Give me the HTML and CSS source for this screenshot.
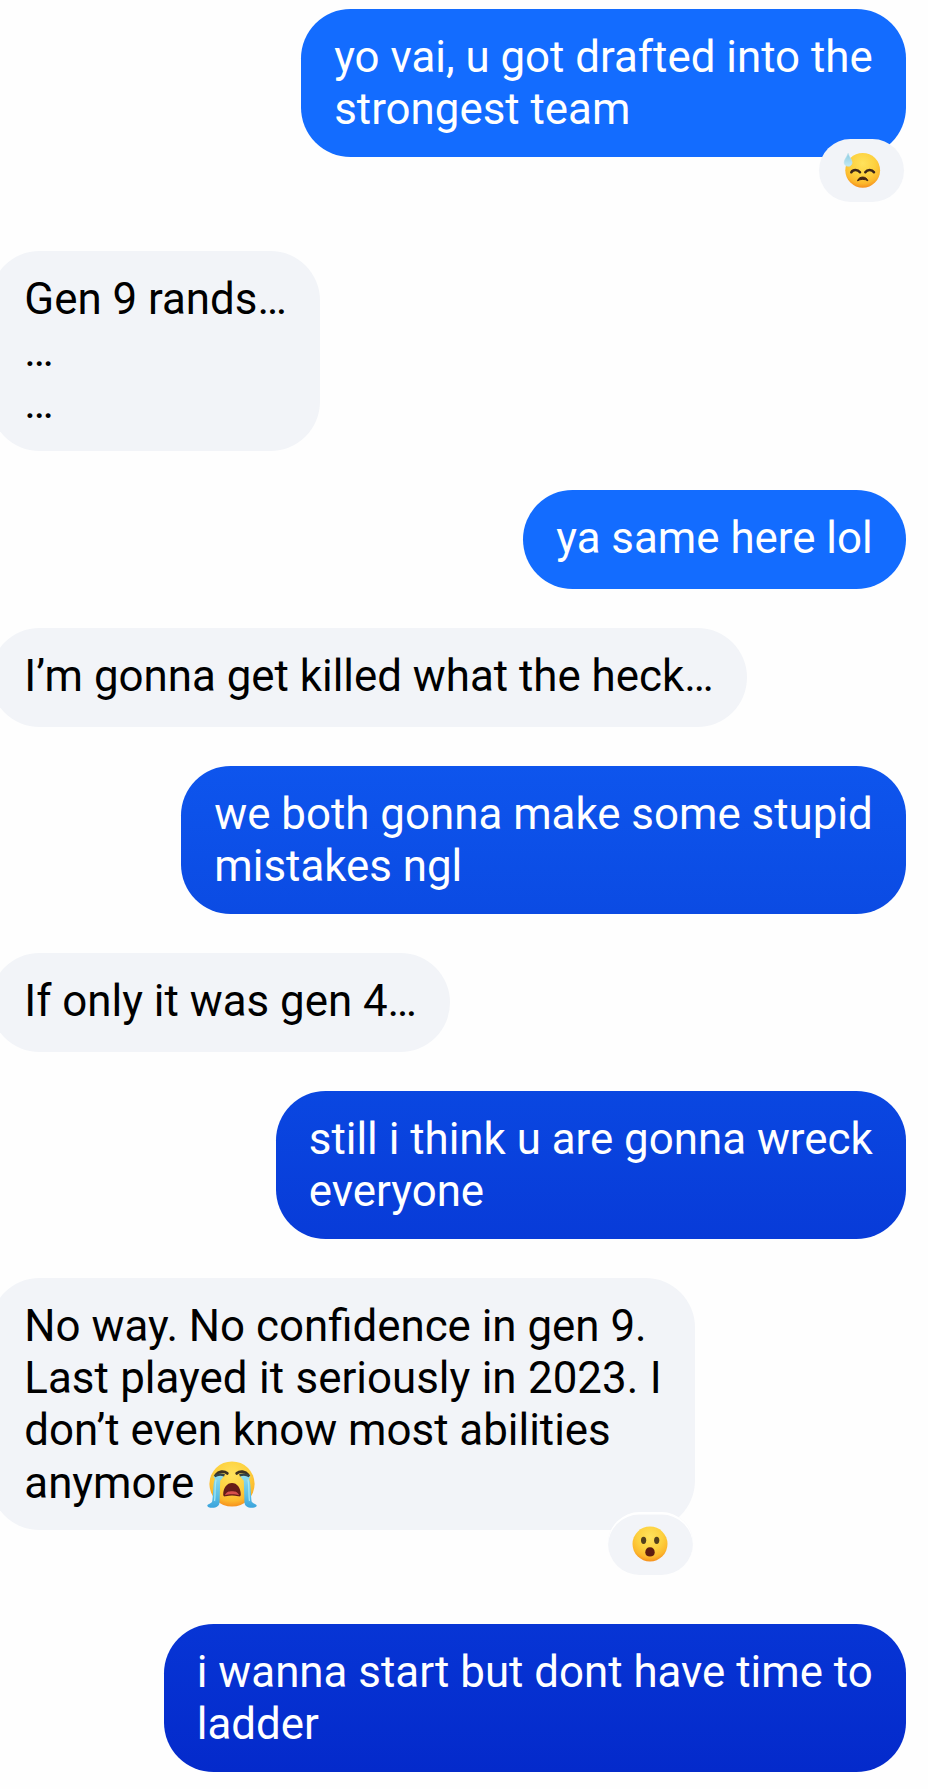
FILE: index.html
```html
<!DOCTYPE html>
<html lang="en">
<head>
<meta charset="utf-8">
<title>Chat</title>
<link rel="stylesheet" href="styles.css">
</head>
<body>
<svg class="defs" aria-hidden="true">
  <defs>
    <radialGradient id="face" cx=".5" cy=".3" r=".72">
      <stop offset="0" stop-color="#ffe25c"/>
      <stop offset=".5" stop-color="#fdd13f"/>
      <stop offset=".8" stop-color="#fcb82c"/>
      <stop offset="1" stop-color="#f58a1c"/>
    </radialGradient>
    <linearGradient id="tear" x1="0" y1="0" x2="0" y2="1">
      <stop offset="0" stop-color="#8fdcee"/>
      <stop offset=".6" stop-color="#5cc0e6"/>
      <stop offset="1" stop-color="#3ba3dc"/>
    </linearGradient>
    <linearGradient id="drop" x1="0" y1="0" x2="0" y2="1">
      <stop offset="0" stop-color="#8ccbe0"/>
      <stop offset="1" stop-color="#c3eaf5"/>
    </linearGradient>
  </defs>
</svg>
<main class="chat">
  <div class="message sent reacted tone-a">
    <p class="text">yo vai, u got drafted into the<br>strongest team</p>
    <span class="reaction">
      <svg class="react-icon" viewBox="0 0 40 40">
        <circle cx="20.7" cy="20.3" r="17.4" fill="url(#face)"/>
        <path d="M6.1 3.3C5 7 2.2 9.3 2.2 12.5c0 2.3 1.8 3.8 4 3.8s4-1.500 3.900-3.900C10 9.300 7.200 7 6.100 3.300z" fill="url(#drop)" stroke="#b9e1ed" stroke-width=".6"/>
        <path d="M9.300 22.300c1.700-3 6.400-3 8.700 0M23.300 22.300c2-3 6.700-3 8.700 0" fill="none" stroke="#3b2519" stroke-width="2.500" stroke-linecap="round"/>
        <path d="M15.500 30.800c1.500-5 8.900-5 10.400 0-2.800-1.900-7.600-1.900-10.400 0z" fill="#422312" stroke="#422312" stroke-width="1" stroke-linejoin="round"/>
      </svg>
    </span>
  </div>
  <div class="message received"><p class="text">Gen 9 rands…<br>…<br>…</p></div>
  <div class="message sent single tone-a"><p class="text">ya same here lol</p></div>
  <div class="message received single"><p class="text">I’m gonna get killed what the heck…</p></div>
  <div class="message sent tone-b"><p class="text">we both gonna make some stupid<br>mistakes ngl</p></div>
  <div class="message received single"><p class="text">If only it was gen 4…</p></div>
  <div class="message sent tone-c"><p class="text">still i think u are gonna wreck<br>everyone</p></div>
  <div class="message received reacted">
    <p class="text">No way. No confidence in gen 9.<br><span class="loose">Last played it seriously in 2023. I</span><br>don’t even know most abilities<br>anymore <svg class="inline-emoji" viewBox="0 0 50 50">
        <circle cx="25" cy="24" r="22.600" fill="url(#face)"/>
        <path d="M9 14.800c2.500-3.600 8-4.200 11.300-1.400M29.700 13.400c3.300-2.800 8.800-2.200 11.300 1.400" fill="none" stroke="#3d3020" stroke-width="2.800" stroke-linecap="round"/>
        <path d="M6.300 16.800c3.500-1.600 7.200-1.600 10.300-.3l-3.400 4.300-.6 20.700c0 4.500-3 6.300-7.300 6.300-3 0-5-.9-5-2.300 0-1.500 3.500-1.800 4.700-3.600 1.200-2 .8-20.800 3.100-23zM43.700 16.800c-3.500-1.600-7.200-1.600-10.300-.3l3.400 4.300.6 20.700c0 4.500 3 6.300 7.300 6.300 3 0 5-.9 5-2.300 0-1.500-3.500-1.800-4.700-3.600-1.200-2-.8-20.800-3.100-23z" fill="url(#tear)"/>
        <path d="M9 19.500C7.500 27 8.500 36 7.500 41M41 19.500c1.500 7.500.5 16.500 1.500 21.500" fill="none" stroke="#a3e7f3" stroke-width="1.300"/>
        <path d="M7.500 16.300c2.900-2 6-2.300 10-1M42.500 16.300c-2.900-2-6-2.300-10-1" fill="none" stroke="#334248" stroke-width="2.600"/>
        <path d="M16.200 34.500c0-6.800 3.700-11.600 8.800-11.600s8.800 4.800 8.800 11.600c0 1.700-1 2.200-2.500 1.800-4-1.100-8.600-1.100-12.600 0-1.500.4-2.500-.1-2.500-1.800z" fill="#651c18"/>
        <path d="M18 35.200c1.300-3.500 3.800-4 7-4s5.700.5 7 4c-4-1.200-10-1.200-14 0z" fill="#d8504c"/>
      </svg></p>
    <span class="reaction ringed">
      <svg class="react-icon" viewBox="0 0 40 40">
        <circle cx="20" cy="20" r="17.500" fill="url(#face)"/>
        <ellipse cx="13.600" cy="16.300" rx="2.600" ry="3.600" fill="#54401c"/>
        <ellipse cx="26.700" cy="16.300" rx="2.600" ry="3.600" fill="#54401c"/>
        <path d="M20 23.300c3 0 4.700 2.100 4.700 4.900 0 2.900-1.800 4.400-4.700 4.400s-4.700-1.500-4.700-4.400c0-2.800 1.700-4.900 4.700-4.900z" fill="#5e1c10"/>
      </svg>
    </span>
  </div>
  <div class="message sent tone-d"><p class="text">i wanna start but dont have time to<br>ladder</p></div>
</main>
</body>
</html>
```
FILE: styles.css
```css
body {
  margin: 0;
  background: #fefefe;
  font-family: Roboto, "Liberation Sans", sans-serif;
}

.defs {
  position: absolute;
  width: 0;
  height: 0;
}

.chat {
  display: flex;
  flex-direction: column;
  gap: 39.2px;
  box-sizing: border-box;
  height: 1789px;
  padding: 9.3px 22px 0 0;
  margin-left: -10px;
  overflow: hidden;
}

.message {
  position: relative;
  flex: none;
  padding: 21.7px 33.3px 21.6px;
  border-radius: 49.5px;
}

.text {
  margin: 0;
  font-size: 43.85px;
  line-height: 52.2px;
  white-space: nowrap;
}

.single { padding-bottom: 25.1px; }

.sent {
  align-self: flex-end;
  color: #fff;
}

.received {
  align-self: flex-start;
  padding-left: 34.3px;
  background: #f2f4f8;
  color: #000;
}

.reacted { margin-bottom: 54.8px; }

/* The digits and the trailing capital sit slightly wider on this line. */
.loose { word-spacing: .65px; }

.tone-a { background: #136cff; }
.tone-b { background: linear-gradient(#0e55ed, #0b4be3); }
.tone-c { background: linear-gradient(#0a47e1, #083bd8); }
.tone-d { background: linear-gradient(#0735d5, #042acb); }

.reaction {
  position: absolute;
  right: 2px;
  bottom: -45px;
  display: flex;
  align-items: center;
  justify-content: center;
  width: 85px;
  height: 63px;
  border-radius: 31.5px;
  background: #f2f4f8;
}

.ringed { box-shadow: inset 0 2.5px 0 #fff; }

.react-icon {
  width: 40px;
  height: 40px;
}

.inline-emoji {
  width: 50px;
  height: 50px;
  margin: -10px 0 -10px 2px;
  vertical-align: -2px;
}
```
